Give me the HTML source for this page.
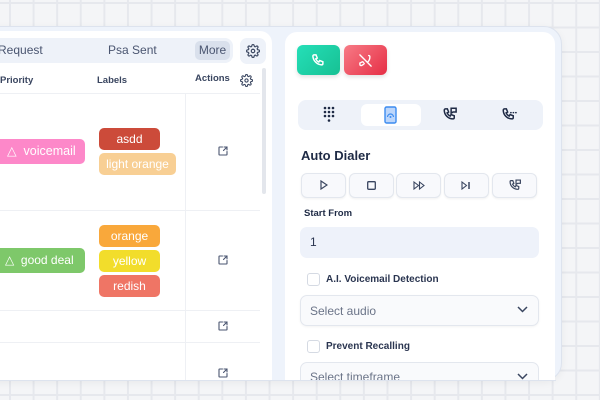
<!DOCTYPE html>
<html><head><meta charset="utf-8"><style>
*{box-sizing:border-box;margin:0;padding:0}
body{width:600px;height:400px;overflow:hidden;position:relative;font-family:"Liberation Sans",sans-serif;color:#2a3550;
background-color:#f4f5f7;
background-image:linear-gradient(90deg,#e6e8ed 2px,transparent 2px),linear-gradient(#e6e8ed 2px,transparent 2px);
background-size:23.6px 24.5px;background-position:9px 2px}
.abs{position:absolute}
.frame{left:-10px;top:26px;width:572px;height:355px;background:#eef3fb;border:1px solid #dde3ee;border-radius:0 18px 18px 0;box-shadow:0 2px 8px rgba(0,0,0,.05)}
.lp{left:-10px;top:31px;width:282px;height:349px;background:#fff;border-radius:0 12px 0 0}
.rp{left:285px;top:32px;width:270px;height:348px;background:#fff;border-radius:12px 12px 0 0}
.pill{position:absolute;border-radius:5px;color:#fff;font-size:12px;text-align:center;line-height:22px;white-space:nowrap}
.hd{font-size:9.5px;font-weight:bold;color:#3a4660}
.vline{position:absolute;width:1px;background:#eef0f4}
.hline{position:absolute;height:1px;background:#eef0f4}
.cb{position:absolute;background:#f8f9fc;border:1px solid #e3e7ee;border-radius:6px;width:45px;height:25px;box-shadow:0 1px 2px rgba(0,0,0,.06)}
.sel{position:absolute;left:300px;width:239px;height:31px;border:1px solid #e3e7ee;border-radius:7px;background:#f9fafc;font-size:12px;color:#6b7488;padding:8px 0 0 9px;box-shadow:0 1px 2px rgba(0,0,0,.05)}
.chk{position:absolute;left:307px;width:13px;height:13px;border:1px solid #d5dae3;border-radius:3px;background:#fff}
.lbl{position:absolute;left:326px;font-size:10px;font-weight:bold;color:#2a3550}
</style></head><body>
<div class="abs frame"></div>
<div class="abs lp"></div>
<div class="abs rp"></div>

<div class="abs" style="left:-10px;top:38px;width:243px;height:25px;background:#eef2f9;border-radius:8px"></div>
<div class="abs" style="left:-2px;top:43px;font-size:12px;color:#4a5570">Request</div>
<div class="abs" style="left:108px;top:43px;font-size:12px;color:#4a5570">Psa Sent</div>
<div class="abs" style="left:195px;top:41px;width:35px;height:19px;background:#d9e0ec;border-radius:5px;font-size:12px;color:#4a5570;text-align:center;line-height:19px">More</div>
<div class="abs" style="left:240px;top:38px;width:26px;height:26px;background:#eef2f9;border-radius:7px"></div>
<svg class="abs" style="left:246px;top:44px" width="14" height="14" viewBox="0 0 24 24" fill="none" stroke="#3a4660" stroke-width="2"><circle cx="12" cy="12" r="3"/><path d="M19.4 15a1.7 1.7 0 0 0 .3 1.8l.1.1a2 2 0 1 1-2.8 2.8l-.1-.1a1.7 1.7 0 0 0-2.9 1.2V21a2 2 0 1 1-4 0v-.1a1.7 1.7 0 0 0-2.9-1.2l-.1.1a2 2 0 1 1-2.8-2.8l.1-.1A1.7 1.7 0 0 0 3 14H3a2 2 0 1 1 0-4h.1a1.7 1.7 0 0 0 1.2-2.9l-.1-.1a2 2 0 1 1 2.8-2.8l.1.1A1.7 1.7 0 0 0 10 3V3a2 2 0 1 1 4 0v.1a1.7 1.7 0 0 0 2.9 1.2l.1-.1a2 2 0 1 1 2.8 2.8l-.1.1A1.7 1.7 0 0 0 21 10h.1a2 2 0 1 1 0 4h-.1a1.7 1.7 0 0 0-1.6 1z"/></svg>

<div class="abs hd" style="left:0;top:75px">Priority</div>
<div class="abs hd" style="left:97px;top:75px">Labels</div>
<div class="abs hd" style="left:195px;top:73px">Actions</div>
<svg class="abs" style="left:240px;top:74px" width="13" height="13" viewBox="0 0 24 24" fill="none" stroke="#3a4660" stroke-width="2"><circle cx="12" cy="12" r="3"/><path d="M19.4 15a1.7 1.7 0 0 0 .3 1.8l.1.1a2 2 0 1 1-2.8 2.8l-.1-.1a1.7 1.7 0 0 0-2.9 1.2V21a2 2 0 1 1-4 0v-.1a1.7 1.7 0 0 0-2.9-1.2l-.1.1a2 2 0 1 1-2.8-2.8l.1-.1A1.7 1.7 0 0 0 3 14H3a2 2 0 1 1 0-4h.1a1.7 1.7 0 0 0 1.2-2.9l-.1-.1a2 2 0 1 1 2.8-2.8l.1.1A1.7 1.7 0 0 0 10 3V3a2 2 0 1 1 4 0v.1a1.7 1.7 0 0 0 2.9 1.2l.1-.1a2 2 0 1 1 2.8 2.8l-.1.1A1.7 1.7 0 0 0 21 10h.1a2 2 0 1 1 0 4h-.1a1.7 1.7 0 0 0-1.6 1z"/></svg>
<div class="abs" style="left:262px;top:68px;width:4px;height:126px;background:#e3e6ec;border-radius:2px"></div>

<div class="hline" style="left:0;top:93px;width:260px"></div>
<div class="hline" style="left:0;top:210px;width:260px"></div>
<div class="hline" style="left:0;top:310px;width:260px"></div>
<div class="hline" style="left:0;top:342px;width:260px"></div>
<div class="vline" style="left:185px;top:93px;height:287px"></div>

<div class="pill" style="left:-10px;top:139px;width:95px;height:25px;line-height:25px;background:#fd88c9;text-align:left;padding-left:17px;font-size:12.5px">△ &nbsp;voicemail</div>
<div class="pill" style="left:99px;top:128px;width:61px;background:#cc4b3a">asdd</div>
<div class="pill" style="left:99px;top:153px;width:77px;background:#f8cf94">light orange</div>
<div class="pill" style="left:-10px;top:248px;width:95px;height:25px;line-height:25px;background:#7ec86a;text-align:left;padding-left:15px;font-size:12px">△&nbsp; good deal</div>
<div class="pill" style="left:99px;top:225px;width:61px;background:#f9a83b">orange</div>
<div class="pill" style="left:99px;top:250px;width:61px;background:#f2dd2b">yellow</div>
<div class="pill" style="left:99px;top:275px;width:61px;background:#ef7565">redish</div>

<svg width="0" height="0" style="position:absolute"><defs><symbol id="ext" viewBox="0 0 24 24"><path d="M11 4H5a1 1 0 0 0-1 1v14a1 1 0 0 0 1 1h14a1 1 0 0 0 1-1v-6M13 11l7-7M14 4h6v6" fill="none" stroke="#4a5570" stroke-width="2.2" stroke-linecap="round"/></symbol></defs></svg>
<svg class="abs" style="left:217px;top:145px" width="12" height="12"><use href="#ext"/></svg>
<svg class="abs" style="left:217px;top:254px" width="12" height="12"><use href="#ext"/></svg>
<svg class="abs" style="left:217px;top:320px" width="12" height="12"><use href="#ext"/></svg>
<svg class="abs" style="left:217px;top:367px" width="12" height="12"><use href="#ext"/></svg>

<div class="abs" style="left:297px;top:45px;width:43px;height:30px;border-radius:6px;background:linear-gradient(135deg,#25dfb8,#17c093);box-shadow:0 2px 4px rgba(0,0,0,.12)"></div>
<svg class="abs" style="left:311px;top:53px" width="15" height="15" viewBox="0 0 24 24" fill="none" stroke="#fff" stroke-width="2.4" stroke-linecap="round"><path d="M5 3h3l2 5-2.5 1.5a11 11 0 0 0 5 5L14 12l5 2v3a2 2 0 0 1-2 2A15 15 0 0 1 3 5a2 2 0 0 1 2-2z"/></svg>
<div class="abs" style="left:344px;top:45px;width:43px;height:30px;border-radius:6px;background:linear-gradient(135deg,#f77b86,#e62e45);box-shadow:0 2px 4px rgba(0,0,0,.12)"></div>
<svg class="abs" style="left:358px;top:53px" width="15" height="15" viewBox="0 0 24 24" fill="none" stroke="#fff" stroke-width="2.2" stroke-linecap="round"><path d="M3 3l18 18M17 4a2 2 0 0 1 2 2c0 3-1 6-3 8M10 17c-2 2-4 3-5 3a2 2 0 0 1-2-2v-2l4-2 2 1"/></svg>

<div class="abs" style="left:298px;top:100px;width:245px;height:30px;background:#eef2f9;border-radius:8px"></div>
<div class="abs" style="left:361px;top:104px;width:60px;height:22px;background:#fff;border-radius:6px"></div>
<svg class="abs" style="left:322px;top:106px" width="14" height="18" viewBox="0 0 14 18" fill="#1e2a45"><circle cx="3" cy="2" r="1.3"/><circle cx="7" cy="2" r="1.3"/><circle cx="11" cy="2" r="1.3"/><circle cx="3" cy="6" r="1.3"/><circle cx="7" cy="6" r="1.3"/><circle cx="11" cy="6" r="1.3"/><circle cx="3" cy="10" r="1.3"/><circle cx="7" cy="10" r="1.3"/><circle cx="11" cy="10" r="1.3"/><circle cx="7" cy="14.5" r="1.3"/></svg>
<svg class="abs" style="left:384px;top:106px" width="13" height="18" viewBox="0 0 13 18"><rect x="1" y="1" width="11" height="16" rx="1.5" fill="#bcd6fb" stroke="#3c8cf0" stroke-width="1.4"/><path d="M3.5 11a3 3 0 0 1 6 0" fill="none" stroke="#3c8cf0" stroke-width="1.2"/><circle cx="6.5" cy="11" r="1" fill="#3c8cf0"/></svg>
<svg class="abs" style="left:443px;top:107px" width="15" height="15" viewBox="0 0 24 24" fill="none" stroke="#1e2a45" stroke-width="2.4" stroke-linecap="round"><path d="M4 3h3l2 5-2.5 1.5a11 11 0 0 0 5 5L13 12l5 2v3a2 2 0 0 1-2 2A14 14 0 0 1 2 5a2 2 0 0 1 2-2zM13 2h8v6h-5l-3 2z"/></svg>
<svg class="abs" style="left:502px;top:107px" width="15" height="15" viewBox="0 0 24 24" fill="none" stroke="#1e2a45" stroke-width="2.4" stroke-linecap="round"><path d="M4 3h3l2 5-2.5 1.5a11 11 0 0 0 5 5L13 12l5 2v3a2 2 0 0 1-2 2A14 14 0 0 1 2 5a2 2 0 0 1 2-2zM14 9h.5M18 9h.5M22 9h.5"/></svg>

<div class="abs" style="left:301px;top:148px;font-size:13px;font-weight:bold;color:#1e2a45">Auto Dialer</div>
<div class="cb" style="left:301px;top:173px"></div>
<div class="cb" style="left:349px;top:173px"></div>
<div class="cb" style="left:396px;top:173px"></div>
<div class="cb" style="left:444px;top:173px"></div>
<div class="cb" style="left:492px;top:173px"></div>
<svg class="abs" style="left:320px;top:180px" width="8" height="10" viewBox="0 0 8 10"><path d="M1 1l6 4-6 4z" fill="none" stroke="#3a4660" stroke-width="1.2"/></svg>
<svg class="abs" style="left:367px;top:181px" width="9" height="9"><rect x=".7" y=".7" width="7.6" height="7.6" rx="1" fill="none" stroke="#3a4660" stroke-width="1.3"/></svg>
<svg class="abs" style="left:413px;top:181px" width="12" height="9" viewBox="0 0 12 9"><path d="M1 1l4.5 3.5L1 8zM6.5 1l4.5 3.5L6.5 8z" fill="none" stroke="#3a4660" stroke-width="1.1"/></svg>
<svg class="abs" style="left:461px;top:181px" width="10" height="9" viewBox="0 0 10 9"><path d="M1 1l4.5 3.5L1 8z" fill="none" stroke="#3a4660" stroke-width="1.1"/><path d="M8 1v7" stroke="#3a4660" stroke-width="1.5"/></svg>
<svg class="abs" style="left:509px;top:179px" width="13" height="13" viewBox="0 0 24 24" fill="none" stroke="#3a4660" stroke-width="2.2" stroke-linecap="round"><path d="M4 3h3l2 5-2.5 1.5a11 11 0 0 0 5 5L13 12l5 2v3a2 2 0 0 1-2 2A14 14 0 0 1 2 5a2 2 0 0 1 2-2zM13 2h8v6h-5l-3 2z"/></svg>

<div class="abs" style="left:304px;top:208px;font-size:9.5px;font-weight:bold;color:#1e2a45">Start From</div>
<div class="abs" style="left:300px;top:227px;width:239px;height:31px;background:#eef2fa;border-radius:7px;font-size:12px;color:#2a3550;padding:8px 0 0 10px">1</div>

<div class="chk" style="top:273px"></div>
<div class="lbl" style="top:274px">A.I. Voicemail Detection</div>
<div class="sel" style="top:295px">Select audio</div>
<svg class="abs" style="left:517px;top:306px" width="11" height="7" viewBox="0 0 11 7"><path d="M1 1l4.5 4.5L10 1" fill="none" stroke="#3a4660" stroke-width="1.5"/></svg>

<div class="chk" style="top:340px"></div>
<div class="lbl" style="top:341px">Prevent Recalling</div>
<div class="sel" style="top:362px;height:18px;border-bottom:none;border-radius:7px 7px 0 0;box-shadow:none;overflow:hidden;padding-top:7px">Select timeframe</div>
<svg class="abs" style="left:517px;top:373px" width="11" height="7" viewBox="0 0 11 7"><path d="M1 1l4.5 4.5L10 1" fill="none" stroke="#3a4660" stroke-width="1.5"/></svg>

<div class="abs" style="left:0;top:380px;width:556px;height:1px;background:#dde3ee"></div>
</body></html>
